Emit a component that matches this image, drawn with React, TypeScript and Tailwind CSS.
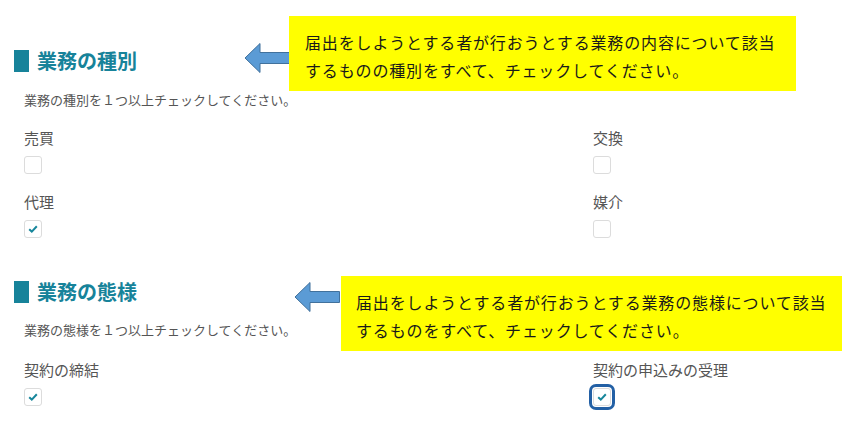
import React from 'react';

const jp = { fontFamily: '"Noto Sans CJK JP", "Noto Sans", sans-serif' };

// Left-pointing block arrow used for annotations
function BlockArrow() {
  return (
    <svg width="47" height="32" viewBox="0 0 47 32">
      <path
        d="M1 16 L16 1.5 L16 10.5 L45.5 10.5 L45.5 21.5 L16 21.5 L16 30.5 Z"
        fill="#5b9bd5"
        stroke="#41719c"
        strokeWidth="1"
        strokeLinejoin="miter"
      />
    </svg>
  );
}

function CheckBox({ checked, focused }: { checked?: boolean; focused?: boolean }) {
  return (
    <div
      className={
        'flex h-[18px] w-[18px] items-center justify-center rounded-[3px] border border-[#dcdcdc] bg-white ' +
        (focused ? 'outline-[3px] outline-solid outline-offset-[1px] outline-[#2360a5]' : '')
      }
    >
      {checked && (
        <svg width="10" height="8" viewBox="0 0 10 8">
          <path d="M1.2 4.2 L3.8 6.6 L8.8 1.2" fill="none" stroke="#17869b" strokeWidth="2" />
        </svg>
      )}
    </div>
  );
}

function Field({ label, checked, focused }: { label: string; checked?: boolean; focused?: boolean }) {
  return (
    <div className="flex flex-col">
      <div className="h-[20px] text-[15px] leading-[20px] text-[#555]">{label}</div>
      <div className="mt-[8px]">
        <CheckBox checked={checked} focused={focused} />
      </div>
    </div>
  );
}

function Heading({ title }: { title: string }) {
  return (
    <div className="flex items-center gap-[8px] pl-[14px]">
      <div className="h-[22px] w-[15px] bg-[#17839a]" />
      <h2 className="text-[20px] font-bold leading-[22px] text-[#17839a]">{title}</h2>
    </div>
  );
}

function Note({ lines, className }: { lines: string[]; className: string }) {
  return (
    <div className={'absolute h-[75px] bg-[#ffff00] pt-[12px] text-[16px] leading-[28px] tracking-[0.85px] text-[#1a1a1a] ' + className}>
      {lines.map((l, i) => (
        <div key={i}>{l}</div>
      ))}
    </div>
  );
}

export default function App() {
  return (
    <div className="relative h-[421px] w-[858px] overflow-hidden bg-white" style={jp}>
      <div className="pt-[50px]">
        <Heading title="業務の種別" />
        <p className="mt-[18px] pl-[24px] text-[13px] leading-[20px] text-[#555]">業務の種別を１つ以上チェックしてください。</p>
        <div className="mt-[18px] grid grid-cols-[569px_1fr] gap-y-[18px] pl-[24px]">
          <Field label="売買" />
          <Field label="交換" />
          <Field label="代理" checked />
          <Field label="媒介" />
        </div>

        <div className="mt-[43px]">
          <Heading title="業務の態様" />
        </div>
        <p className="mt-[17px] pl-[24px] text-[13px] leading-[20px] text-[#555]">業務の態様を１つ以上チェックしてください。</p>
        <div className="mt-[20px] grid grid-cols-[569px_1fr] pl-[24px]">
          <Field label="契約の締結" checked />
          <Field label="契約の申込みの受理" checked focused />
        </div>
      </div>

      <div className="absolute left-[244px] top-[42px]">
        <BlockArrow />
      </div>
      <Note
        className="left-[289px] top-[16px] w-[507px] pl-[16px]"
        lines={['届出をしようとする者が行おうとする業務の内容について該当', 'するものの種別をすべて、チェックしてください。']}
      />

      <div className="absolute left-[294px] top-[281px]">
        <BlockArrow />
      </div>
      <Note
        className="left-[341px] top-[276px] w-[501px] pl-[15px]"
        lines={['届出をしようとする者が行おうとする業務の態様について該当', 'するものをすべて、チェックしてください。']}
      />
    </div>
  );
}
